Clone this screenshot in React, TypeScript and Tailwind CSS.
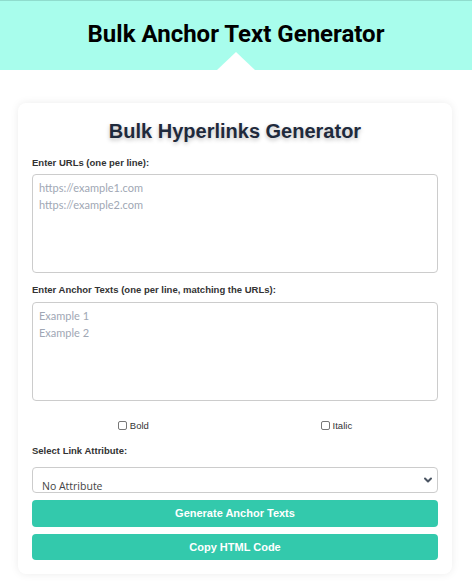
import { ChevronDown } from 'lucide-react';

export default function App() {
  return (
    <div className="min-h-[585px] bg-white" style={{ fontFamily: '"Liberation Sans", Arial, sans-serif' }}>
      <header className="relative h-[70px] bg-[#a8fdec] border-t border-[#8fdccd] flex items-center justify-center">
        <h1 className="text-[24px] font-bold text-black -mt-[3px]" style={{ fontFamily: 'Roboto, sans-serif' }}>
          Bulk Anchor Text Generator
        </h1>
        <div className="absolute bottom-0 left-1/2 -translate-x-1/2 w-0 h-0 border-l-[19px] border-r-[19px] border-b-[18px] border-l-transparent border-r-transparent border-b-white" />
      </header>

      <main className="pt-[33px] pl-[18px] pr-[20px] pb-[10px]">
        <div className="bg-white rounded-lg shadow-[0_0_8px_rgba(0,0,0,0.08)] px-[14px] pt-[13px] pb-[14px]">
          <h2 className="text-center text-[20px] font-bold text-[#1f2a3c] [text-shadow:0_2px_4px_rgba(0,0,0,0.25)]">
            Bulk Hyperlinks Generator
          </h2>

          <label className="block mt-[10px] mb-[4px] text-[9.5px] font-bold text-[#333]">Enter URLs (one per line):</label>
          <textarea
            className="block w-full h-[99px] border border-[#ccc] rounded px-[6px] py-[4px] text-[11px] leading-[17px] resize-none outline-none placeholder:text-[#a0a7b4]"
            style={{ fontFamily: 'Lato, sans-serif' }}
            placeholder={'https://example1.com\nhttps://example2.com'}
          />

          <label className="block mt-[10px] mb-[4px] text-[9.5px] font-bold text-[#333]">
            Enter Anchor Texts (one per line, matching the URLs):
          </label>
          <textarea
            className="block w-full h-[99px] border border-[#ccc] rounded px-[6px] py-[4px] text-[11px] leading-[17px] resize-none outline-none placeholder:text-[#a0a7b4]"
            style={{ fontFamily: 'Lato, sans-serif' }}
            placeholder={'Example 1\nExample 2'}
          />

          <div className="flex justify-around mt-[18px] text-[9.5px] text-[#333]">
            <label className="flex items-center gap-[3px]">
              <span className="w-[9px] h-[9px] border border-[#777] rounded-[2px] bg-white" />
              Bold
            </label>
            <label className="flex items-center gap-[3px]">
              <span className="w-[9px] h-[9px] border border-[#777] rounded-[2px] bg-white" />
              Italic
            </label>
          </div>

          <label className="block mt-[11px] text-[9.5px] font-bold text-[#333]">Select Link Attribute:</label>
          <div className="relative mt-[9px] h-[26px] border border-[#ccc] rounded overflow-hidden">
            <span className="absolute left-[9px] top-[10px] text-[10.5px] leading-[16px] text-[#444]" style={{ fontFamily: '"Open Sans", sans-serif' }}>
              No Attribute
            </span>
            <ChevronDown className="absolute right-[3px] top-[6px] w-[12px] h-[12px] text-[#4b5563]" strokeWidth={4} />
          </div>

          <button className="block w-full h-[27px] mt-[7px] rounded bg-[#33c9ac] text-white text-[11px] font-bold">
            Generate Anchor Texts
          </button>
          <button className="block w-full h-[26px] mt-[7px] rounded bg-[#33c9ac] text-white text-[11px] font-bold">
            Copy HTML Code
          </button>
        </div>
      </main>
    </div>
  );
}
